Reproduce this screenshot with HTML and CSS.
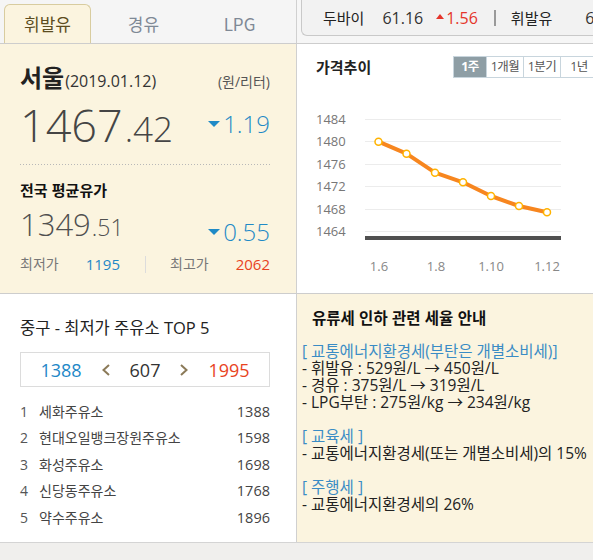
FILE: index.html
```html
<!DOCTYPE html>
<html lang="ko">
<head>
<meta charset="utf-8">
<title>유가 정보</title>
<link rel="stylesheet" href="styles.css">
</head>
<body>
<div class="widget">
  <div class="row top">
    <div class="tabs">
      <div class="tab active">휘발유</div>
      <div class="tab">경유</div>
      <div class="tab">LPG</div>
    </div>
    <div class="ticker-wrap">
      <div class="ticker">
        <span class="tk-name">두바이</span>
        <span class="tk-val">61.16</span>
        <span class="tk-up"><i class="tri-up"></i>1.56</span>
        <span class="tk-sep"></span>
        <span class="tk-name">휘발유</span>
        <span class="tk-val tk-last">66.85</span>
      </div>
    </div>
  </div>

  <div class="row mid">
    <div class="price-panel">
      <div class="city-row">
        <div><span class="city">서울</span><span class="date">(2019.01.12)</span></div>
        <span class="unit">(원/리터)</span>
      </div>
      <div class="main-price">
        <div class="big"><span class="int">1467</span><span class="dec">.42</span></div>
        <div class="chg"><i class="tri-down"></i>1.19</div>
      </div>
      <div class="dots"></div>
      <div class="nat-title">전국 평균유가</div>
      <div class="nat-price">
        <div class="mid-num"><span class="int">1349</span><span class="dec">.51</span></div>
        <div class="chg chg2"><i class="tri-down"></i>0.55</div>
      </div>
      <div class="minmax">
        <div class="half"><span class="lbl">최저가</span><span class="lo">1195</span></div>
        <span class="vsep"></span>
        <div class="half"><span class="lbl">최고가</span><span class="hi">2062</span></div>
      </div>
    </div>

    <div class="chart-panel">
      <div class="chart-head">
        <div class="chart-title">가격추이</div>
        <div class="periods">
          <span class="period on">1주</span><span class="period">1개월</span><span class="period">1분기</span><span class="period">1년</span>
        </div>
      </div>
      <svg class="chart" width="296" height="214" viewBox="0 0 296 214">
        <g class="grid">
          <line x1="68" y1="41.5" x2="264" y2="41.5"/>
          <line x1="68" y1="63.5" x2="264" y2="63.5"/>
          <line x1="68" y1="86.5" x2="264" y2="86.5"/>
          <line x1="68" y1="108.5" x2="264" y2="108.5"/>
          <line x1="68" y1="131.5" x2="264" y2="131.5"/>
          <line x1="68" y1="153.5" x2="264" y2="153.5"/>
        </g>
        <rect x="68" y="158" width="196" height="4" fill="#505050"/>
        <g class="ylab">
          <text x="19" y="46">1484</text>
          <text x="19" y="68">1480</text>
          <text x="19" y="91">1476</text>
          <text x="19" y="113">1472</text>
          <text x="19" y="136">1468</text>
          <text x="19" y="158">1464</text>
        </g>
        <g class="xlab">
          <text x="82" y="193">1.6</text>
          <text x="139" y="193">1.8</text>
          <text x="194" y="193">1.10</text>
          <text x="250" y="193">1.12</text>
        </g>
        <polyline points="81.5,63.7 109.5,75.7 138,94.7 166,104.3 194,118 222,128 250,134.3" fill="none" stroke="#f7861f" stroke-width="4" stroke-linejoin="round" stroke-linecap="round"/>
        <g class="pts">
          <circle cx="81.5" cy="63.7" r="3.5"/>
          <circle cx="109.5" cy="75.7" r="3.5"/>
          <circle cx="138" cy="94.7" r="3.5"/>
          <circle cx="166" cy="104.3" r="3.5"/>
          <circle cx="194" cy="118" r="3.5"/>
          <circle cx="222" cy="128" r="3.5"/>
          <circle cx="250" cy="134.3" r="3.5"/>
        </g>
      </svg>
    </div>
  </div>

  <div class="row bot">
    <div class="top5">
      <div class="top5-title">중구 - 최저가 주유소 TOP 5</div>
      <div class="pager">
        <span class="lo">1388</span>
        <svg class="chev" width="10" height="12" viewBox="0 0 10 12"><polyline points="8,1 2.5,6 8,11"/></svg>
        <span class="cur">607</span>
        <svg class="chev" width="10" height="12" viewBox="0 0 10 12"><polyline points="2,1 7.5,6 2,11"/></svg>
        <span class="hi">1995</span>
      </div>
      <ol class="stations">
        <li><span class="rank">1</span><span class="sname">세화주유소</span><span class="sprice">1388</span></li>
        <li><span class="rank">2</span><span class="sname">현대오일뱅크장원주유소</span><span class="sprice">1598</span></li>
        <li><span class="rank">3</span><span class="sname">화성주유소</span><span class="sprice">1698</span></li>
        <li><span class="rank">4</span><span class="sname">신당동주유소</span><span class="sprice">1768</span></li>
        <li><span class="rank">5</span><span class="sname">약수주유소</span><span class="sprice">1896</span></li>
      </ol>
    </div>
    <div class="tax">
      <div class="tax-title">유류세 인하 관련 세율 안내</div>
      <div class="tax-body">
        <p class="tag">[ 교통에너지환경세(부탄은 개별소비세)]</p>
        <p>- 휘발유 : 529원/L → 450원/L</p>
        <p>- 경유 : 375원/L → 319원/L</p>
        <p>- LPG부탄 : 275원/kg → 234원/kg</p>
        <p class="tag gap">[ 교육세 ]</p>
        <p>- 교통에너지환경세(또는 개별소비세)의 15%</p>
        <p class="tag gap">[ 주행세 ]</p>
        <p>- 교통에너지환경세의 26%</p>
      </div>
    </div>
  </div>
  <div class="footer"></div>
</div>
</body>
</html>
```

FILE: styles.css
```css
* { box-sizing: border-box; margin: 0; padding: 0; }
html, body { width: 593px; height: 560px; overflow: hidden; }
body {
  background: #f0efed;
  font-family: "Open Sans", "Noto Sans CJK KR", sans-serif;
  color: #333;
}
.widget { width: 593px; }
.row { display: flex; }

/* ---------- top ---------- */
.top { height: 44px; border-bottom: 1px solid #cdcdcd; background: #f6f6f6; }
.tabs {
  width: 297px;
  border-right: 1px solid #d0d0d0;
  background: #f5f5f5;
  display: flex;
  gap: 9px;
  padding: 4px 0 0 4px;
}
.tab {
  width: 87px;
  height: 39px;
  text-align: center;
  font-family: "Noto Sans CJK KR", sans-serif;
  font-size: 17px;
  line-height: 40px;
  color: #7f8995;
}
.tab.active {
  background: #fbf4df;
  border: 1px solid #d8cc9f;
  border-bottom: none;
  border-radius: 6px 6px 0 0;
  color: #5b4c20;
  line-height: 38px;
}
.ticker-wrap { flex: 1; padding-left: 4px; overflow: hidden; }
.ticker {
  height: 36px;
  width: 400px;
  border: 1px solid #c9c9c9;
  border-top: none;
  border-right: none;
  border-bottom-left-radius: 6px;
  background: #f2f2f2;
  display: flex;
  align-items: center;
  padding-left: 21px;
  white-space: nowrap;
  font-size: 15px;
  line-height: 34px;
}
.ticker > * { flex-shrink: 0; }
.tk-name { color: #222; }
.tk-val { color: #333; font-size: 16px; margin-left: 18px; }
.tk-up { color: #e5352b; font-size: 16px; margin-left: 13px; display: flex; align-items: center; }
.tri-up {
  display: inline-block;
  width: 0; height: 0;
  border-left: 4.5px solid transparent;
  border-right: 4.5px solid transparent;
  border-bottom: 5px solid #e5352b;
  margin-right: 2px;
  margin-bottom: 3px;
}
.tk-sep { width: 2px; height: 16px; background: #9a9a9a; margin: 0 15px 0 16px; }
.tk-last { margin-left: 33px; }

/* ---------- middle ---------- */
.mid { height: 250px; border-bottom: 1px solid #cdcdcd; }
.price-panel {
  width: 297px;
  border-right: 1px solid #d0d0d0;
  background: #fbf4df;
  padding: 20px 26px 0 20px;
}
.city-row {
  display: flex;
  justify-content: space-between;
  align-items: baseline;
  height: 26px;
  line-height: 26px;
}
.city { font-family: "Noto Sans CJK KR", sans-serif; font-size: 24px; font-weight: 700; color: #222; }
.date { font-size: 16px; color: #333; margin-left: 1px; }
.unit { font-size: 14px; color: #555; }
.main-price {
  display: flex;
  justify-content: space-between;
  align-items: flex-start;
  margin-top: 12px;
  height: 45px;
}
.big { font-size: 45px; line-height: 45px; font-weight: 300; color: #454545; white-space: nowrap; }
.big .dec { font-size: 35px; margin-left: 2px; }
.chg {
  display: flex;
  align-items: center;
  font-size: 24px;
  line-height: 24px;
  font-weight: 300;
  color: #1f8ac6;
  margin-top: 10px;
}
.tri-down {
  display: inline-block;
  width: 0; height: 0;
  border-left: 6.5px solid transparent;
  border-right: 6.5px solid transparent;
  border-top: 6px solid #1f8ac6;
  margin-right: 3px;
}
.dots {
  margin-top: 17px;
  height: 1px;
  background: repeating-linear-gradient(to right, #b8b8b8 0 1px, transparent 1px 3px);
}
.nat-title {
  margin-top: 15px;
  font-family: "Noto Sans CJK KR", sans-serif;
  font-size: 15px;
  font-weight: 700;
  line-height: 20px;
  color: #111;
}
.nat-price {
  display: flex;
  justify-content: space-between;
  align-items: flex-start;
  margin-top: 9px;
  height: 35px;
}
.mid-num { font-size: 31px; line-height: 31px; font-weight: 300; color: #505050; }
.mid-num .dec { font-size: 23px; margin-left: 1px; }
.chg2 { margin-top: 11px; }
.minmax {
  display: flex;
  align-items: center;
  margin-top: 10px;
  height: 20px;
  line-height: 20px;
}
.half { width: 100px; display: flex; justify-content: space-between; }
.lbl { font-size: 14px; color: #777; }
.lo { color: #1e88c7; font-size: 15px; }
.hi { color: #e8431e; font-size: 15px; }
.vsep { width: 1px; height: 17px; background: #dcdcdc; margin: 0 24px 0 25px; }

.chart-panel { flex: 1; background: #fff; padding-top: 12px; overflow: hidden; }
.chart-head { display: flex; height: 22px; padding-left: 19px; }
.chart-title {
  width: 137px;
  flex-shrink: 0;
  font-family: "Noto Sans CJK KR", sans-serif;
  font-size: 15px;
  font-weight: 700;
  line-height: 22px;
  color: #222;
}
.periods { display: flex; flex-shrink: 0; border: 1px solid #c8d5dd; height: 22px; }
.period {
  width: 37px;
  border-left: 1px solid #c8d5dd;
  text-align: center;
  font-size: 12.5px;
  line-height: 20px;
  letter-spacing: -0.5px;
  color: #555;
  background: #fff;
}
.period.on { width: 32px; border-left: none; background: #8e9ea5; color: #fff; font-weight: 700; }
.chart { display: block; }
.grid line { stroke: #ececec; stroke-width: 1; }
.ylab text { font-family: "Open Sans", sans-serif; font-size: 13px; fill: #777; }
.xlab text { font-family: "Open Sans", sans-serif; font-size: 13px; fill: #888; text-anchor: middle; }
.pts circle { fill: #fff; stroke: #ffb300; stroke-width: 1.5; }

/* ---------- bottom ---------- */
.bot { height: 249px; border-bottom: 1px solid #d4d4d4; }
.top5 {
  width: 297px;
  border-right: 1px solid #d0d0d0;
  background: #fff;
  padding: 23px 26px 0 20px;
}
.top5-title { font-size: 16.5px; line-height: 22px; color: #222; white-space: nowrap; }
.pager {
  margin-top: 13px;
  height: 35px;
  border: 1px solid #dcdcdc;
  display: flex;
  justify-content: center;
  align-items: center;
  gap: 19px;
  font-size: 18px;
}
.pager .lo, .pager .hi { font-size: 18px; }
.pager .cur { color: #333; }
.chev polyline { fill: none; stroke: #8b7a58; stroke-width: 2; }
.stations { list-style: none; margin-top: 11.5px; }
.stations li {
  display: flex;
  height: 26.5px;
  line-height: 26.5px;
  font-size: 14px;
  color: #444;
}
.rank { width: 19px; color: #555; }
.sprice { margin-left: auto; font-size: 14.5px; }

.tax { flex: 1; background: #fbf4df; padding-top: 12px; overflow: hidden; }
.tax-title {
  padding-left: 15px;
  font-family: "Noto Sans CJK KR", sans-serif;
  font-size: 15.5px;
  font-weight: 700;
  line-height: 22px;
  color: #111;
}
.tax-body {
  margin-top: 15px;
  padding-left: 5px;
  font-size: 15.5px;
  line-height: 17px;
  color: #222;
  white-space: nowrap;
}
.tax-body .tag { color: #3a8cc5; }
.tax-body .gap { margin-top: 17px; }

.footer { height: 17px; background: #f0efed; }
```
